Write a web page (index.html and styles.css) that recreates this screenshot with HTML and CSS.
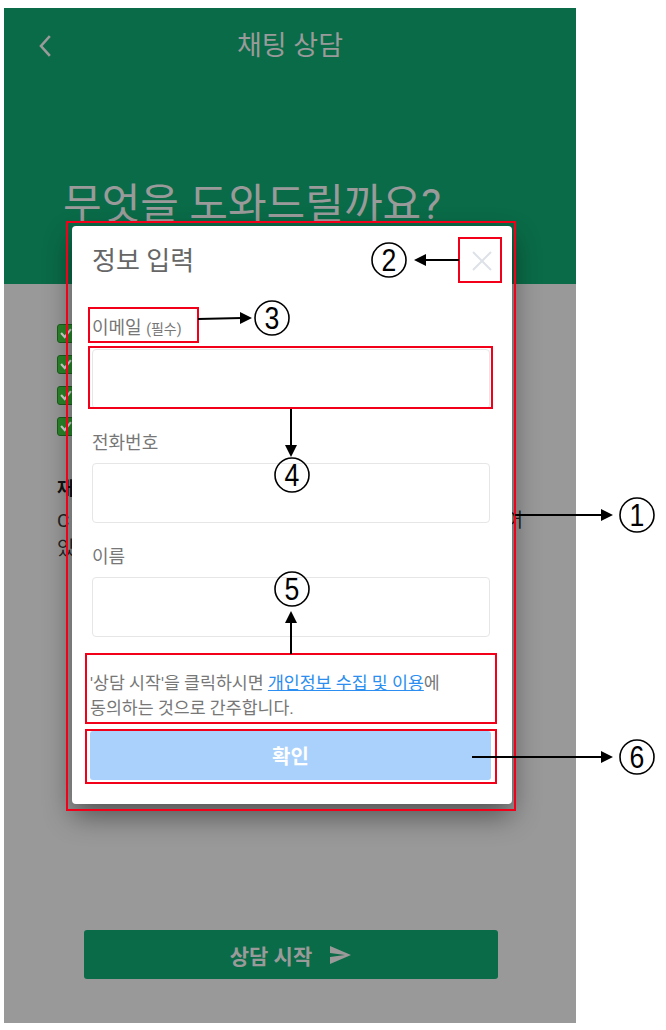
FILE: index.html
```html
<!DOCTYPE html>
<html lang="ko">
<head>
<meta charset="utf-8">
<title>채팅 상담</title>
<link rel="stylesheet" href="styles.css">
</head>
<body>
<div class="page">
  <div class="phone">
    <header class="hero">
      <div class="topbar">
        <svg class="back" viewBox="0 0 14 22" aria-hidden="true"><path d="M11 2 L3 11 L11 20" fill="none" stroke="#9a9a9a" stroke-width="2.6" stroke-linecap="square"/></svg>
        <h1 class="title">채팅 상담</h1>
        <span></span>
      </div>
      <h2 class="headline">무엇을 도와드릴까요?</h2>
    </header>
    <main class="content">
      <ul class="checks">
        <li><span class="box"><svg viewBox="0 0 18 18"><path d="M3.5 8.5 L7.5 13 L14.5 4" fill="none" stroke="#d8d8d8" stroke-width="2.4"/></svg></span>상담원과 실시간 채팅 상담</li>
        <li><span class="box"><svg viewBox="0 0 18 18"><path d="M3.5 8.5 L7.5 13 L14.5 4" fill="none" stroke="#d8d8d8" stroke-width="2.4"/></svg></span>주문 및 배송 문의</li>
        <li><span class="box"><svg viewBox="0 0 18 18"><path d="M3.5 8.5 L7.5 13 L14.5 4" fill="none" stroke="#d8d8d8" stroke-width="2.4"/></svg></span>교환 및 반품 문의</li>
        <li><span class="box"><svg viewBox="0 0 18 18"><path d="M3.5 8.5 L7.5 13 L14.5 4" fill="none" stroke="#d8d8d8" stroke-width="2.4"/></svg></span>기타 서비스 문의</li>
      </ul>
      <p class="notice-title">재택 상담 운영 안내</p>
      <div class="notice">
        <div class="line justify">C 고객센터는 평일 오전 9시부터 운영되어</div>
        <div class="line">있는 순서대로 답변드리겠습니다.</div>
      </div>
      <button class="start" type="button">상담 시작
        <svg class="send" viewBox="0 0 24 24" aria-hidden="true"><path d="M2.01 21L23 12 2.01 3 2 10l15 2-15 2z" fill="#9a9a9a"/></svg>
      </button>
    </main>

    <section class="modal">
      <div class="modal-head">
        <h3 class="modal-title">정보 입력</h3>
        <svg class="close" viewBox="0 0 20 20" aria-hidden="true"><path d="M1 1 L19 19 M19 1 L1 19" stroke="#dde1e8" stroke-width="2"/></svg>
      </div>
      <div class="field first">
        <label class="label">이메일 <small>(필수)</small></label>
        <div class="input"></div>
      </div>
      <div class="field">
        <label class="label">전화번호</label>
        <div class="input"></div>
      </div>
      <div class="field">
        <label class="label">이름</label>
        <div class="input"></div>
      </div>
      <p class="agree">'상담 시작'을 클릭하시면 <a class="link">개인정보 수집 및 이용</a>에<br>동의하는 것으로 간주합니다.</p>
      <button class="confirm" type="button">확인</button>
    </section>
  </div>

  <svg class="annot" viewBox="0 0 666 1030" aria-hidden="true">
    <g fill="none" stroke="#f20019" stroke-width="2">
      <rect x="67" y="222" width="448" height="588"/>
      <rect x="459" y="238" width="42" height="44"/>
      <rect x="89" y="308" width="109" height="34"/>
      <rect x="89" y="347" width="403" height="61"/>
      <rect x="86" y="654" width="410" height="69"/>
      <rect x="86" y="730" width="410" height="53"/>
    </g>
    <g stroke="#000" stroke-width="2" fill="none">
      <line x1="515" y1="515" x2="603" y2="515"/>
      <line x1="459" y1="260" x2="424" y2="260"/>
      <line x1="198" y1="319" x2="242" y2="318"/>
      <line x1="291" y1="409" x2="291" y2="447"/>
      <line x1="291" y1="654" x2="291" y2="621"/>
      <line x1="472" y1="757" x2="603" y2="757"/>
    </g>
    <g fill="#000">
      <polygon points="613,515 601,509 601,521"/>
      <polygon points="414,260 426,254 426,266"/>
      <polygon points="252,318 240,312 240,324"/>
      <polygon points="291,457 285,445 297,445"/>
      <polygon points="291,611 285,623 297,623"/>
      <polygon points="613,757 601,751 601,763"/>
    </g>
    <g class="num">
      <g transform="translate(637 515)"><circle r="17"/><text transform="scale(0.86 1)">1</text></g>
      <g transform="translate(389 260)"><circle r="17"/><text transform="scale(0.86 1)">2</text></g>
      <g transform="translate(272 318)"><circle r="17"/><text transform="scale(0.86 1)">3</text></g>
      <g transform="translate(292 475)"><circle r="17"/><text transform="scale(0.86 1)">4</text></g>
      <g transform="translate(292 589)"><circle r="17"/><text transform="scale(0.86 1)">5</text></g>
      <g transform="translate(637 757)"><circle r="17"/><text transform="scale(0.86 1)">6</text></g>
    </g>
  </svg>
</div>
</body>
</html>
```

FILE: styles.css
```css
* { box-sizing: border-box; }

body {
  margin: 0;
  background: #fff;
  font-family: Roboto, "Noto Sans CJK KR", sans-serif;
}

.page {
  position: relative;
  width: 666px;
  height: 1030px;
  padding: 8px 0 0 4px;
}

.phone {
  position: relative;
  width: 572px;
  height: 1015px;
  display: flex;
  flex-direction: column;
  background: #999;
  overflow: hidden;
}

.hero {
  flex: none;
  height: 276px;
  background: #0a6b48;
  display: flex;
  flex-direction: column;
}

.topbar {
  height: 76px;
  display: grid;
  grid-template-columns: 1fr auto 1fr;
  align-items: center;
}

.back {
  width: 14px;
  height: 22px;
  margin-left: 34px;
}

.title {
  margin: 0;
  font-size: 27px;
  font-weight: normal;
  line-height: 32px;
  color: #9a9a9a;
}

.headline {
  margin: 96px 0 0 59px;
  font-size: 42px;
  font-weight: normal;
  line-height: 50px;
  color: #9a9a9a;
  white-space: nowrap;
}

.content {
  flex: 1;
  display: flex;
  flex-direction: column;
  padding: 34px 53px 44px 53px;
}

.checks {
  list-style: none;
  margin: 0;
  padding: 0;
}

.checks li {
  display: flex;
  align-items: center;
  gap: 8px;
  height: 31px;
  font-size: 18px;
  color: #222;
}

.box {
  width: 18px;
  height: 19px;
  border-radius: 3px;
  background: #2a872a;
  border: 1px solid #1c5e1c;
  display: flex;
}

.box svg {
  width: 100%;
  height: 100%;
}

.notice-title {
  margin: 33px 0 0;
  font-size: 18px;
  font-weight: bold;
  line-height: 28px;
  color: #111;
}

.notice {
  margin-top: 4px;
  font-size: 19px;
  line-height: 28px;
  color: #222;
}

.line {
  white-space: nowrap;
  overflow: hidden;
}

.justify {
  white-space: normal;
  text-align: justify;
  text-align-last: justify;
  height: 28px;
}

.start {
  margin-top: auto;
  margin-left: 27px;
  width: 414px;
  height: 49px;
  border: none;
  border-radius: 3px;
  background: #0a6b48;
  color: #9a9a9a;
  font-family: inherit;
  font-size: 21px;
  font-weight: bold;
  display: flex;
  align-items: center;
  justify-content: center;
  gap: 16px;
  padding: 0;
}

.send {
  width: 24px;
  height: 24px;
}

/* modal */
.modal {
  position: absolute;
  left: 68px;
  top: 218px;
  width: 440px;
  padding: 20px 22px 24px 20px;
  background: #fff;
  border-radius: 4px;
  box-shadow: 0 12px 28px rgba(0, 0, 0, 0.45);
}

.modal-head {
  display: flex;
  align-items: center;
  justify-content: space-between;
  height: 30px;
}

.modal-title {
  margin: 0;
  font-size: 26px;
  font-weight: normal;
  line-height: 30px;
  color: #666;
}

.close {
  width: 20px;
  height: 20px;
  margin-right: -2px;
}

.field {
  margin-top: 24px;
}

.field.first {
  margin-top: 42px;
}

.label {
  display: block;
  font-size: 18px;
  line-height: 20px;
  color: #777;
  margin-bottom: 10px;
}

.label small {
  font-size: 14px;
}

.input {
  height: 60px;
  border: 1px solid #e6e6e6;
  border-radius: 4px;
}

.agree {
  margin: 34px 0 0 -2px;
  font-size: 17.3px;
  line-height: 25px;
  color: #777;
}

.link {
  color: #2b8ef0;
  text-decoration: underline;
}

.confirm {
  display: block;
  margin: 10px 0 0 -2px;
  width: 401px;
  height: 49px;
  border: none;
  border-radius: 3px;
  background: #aad1fb;
  color: #fff;
  font-family: inherit;
  font-size: 20px;
  font-weight: bold;
}

/* annotation overlay */
.annot {
  position: absolute;
  left: 0;
  top: 0;
  width: 666px;
  height: 1030px;
  pointer-events: none;
}

.num circle {
  fill: none;
  stroke: #000;
  stroke-width: 1.6;
}

.num text {
  font-family: "Liberation Sans", Arial, sans-serif;
  font-size: 31px;
  text-anchor: middle;
  dominant-baseline: central;
  fill: #000;
}
```
